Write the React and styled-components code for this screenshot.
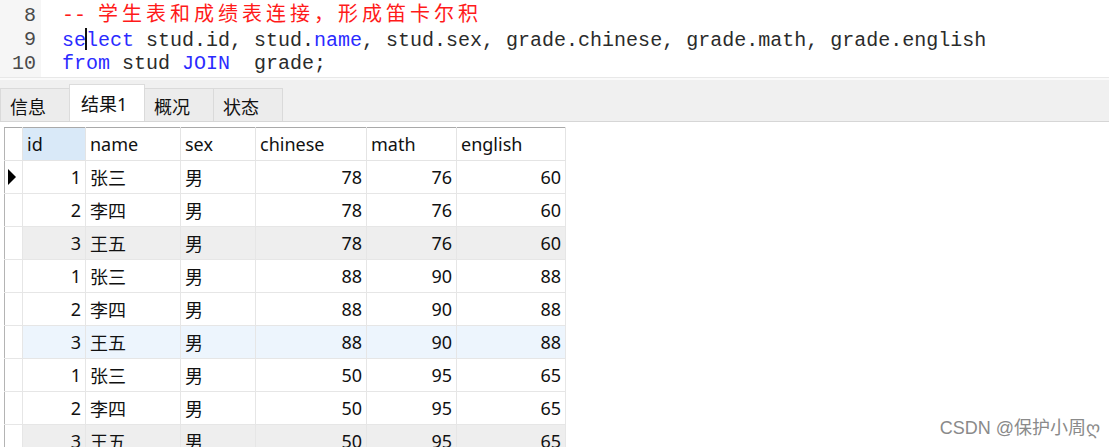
import React from "react";
import styled, { createGlobalStyle } from "styled-components";

const rows = [
  { id: 1, name: "张三", sex: "男", chinese: 78, math: 76, english: 60 },
  { id: 2, name: "李四", sex: "男", chinese: 78, math: 76, english: 60 },
  { id: 3, name: "王五", sex: "男", chinese: 78, math: 76, english: 60, tone: "gray" },
  { id: 1, name: "张三", sex: "男", chinese: 88, math: 90, english: 88 },
  { id: 2, name: "李四", sex: "男", chinese: 88, math: 90, english: 88 },
  { id: 3, name: "王五", sex: "男", chinese: 88, math: 90, english: 88, tone: "blue" },
  { id: 1, name: "张三", sex: "男", chinese: 50, math: 95, english: 65 },
  { id: 2, name: "李四", sex: "男", chinese: 50, math: 95, english: 65 },
  { id: 3, name: "王五", sex: "男", chinese: 50, math: 95, english: 65, tone: "gray" },
];

const tabs = ["信息", "结果1", "概况", "状态"];

function App() {
  return (
    <>
      <Global />
      <Page>
        <Editor>
          <Gutter>
            <span>8</span>
            <span>9</span>
            <span>10</span>
          </Gutter>
          <Code>
            <Line>
              <Comment>
                {"-- "}
                <Wide>学生表和成绩表连接，形成笛卡尔积</Wide>
              </Comment>
            </Line>
            <Line>
              <Kw>se</Kw>
              <Caret />
              <Kw>lect</Kw>
              {" stud.id, stud."}
              <Kw>name</Kw>
              {", stud.sex, grade.chinese, grade.math, grade.english"}
            </Line>
            <Line>
              <Kw>from</Kw>
              {" stud "}
              <Kw>JOIN</Kw>
              {"  grade;"}
            </Line>
          </Code>
        </Editor>

        <TabBar>
          {tabs.map((t, i) => (
            <Tab key={t} $active={i === 1}>
              {t}
            </Tab>
          ))}
        </TabBar>

        <Panel>
          <Grid>
            <colgroup>
              <col style={{ width: 18 }} />
              <col style={{ width: 63 }} />
              <col style={{ width: 95 }} />
              <col style={{ width: 75 }} />
              <col style={{ width: 111 }} />
              <col style={{ width: 90 }} />
              <col style={{ width: 109 }} />
            </colgroup>
            <thead>
              <tr>
                <Head />
                <Head $selected>id</Head>
                <Head>name</Head>
                <Head>sex</Head>
                <Head>chinese</Head>
                <Head>math</Head>
                <Head>english</Head>
              </tr>
            </thead>
            <tbody>
              {rows.map((r, i) => (
                <Row key={i} $tone={r.tone}>
                  <Marker>{i === 0 && <Arrow />}</Marker>
                  <Num>{r.id}</Num>
                  <Cell>{r.name}</Cell>
                  <Cell>{r.sex}</Cell>
                  <Num>{r.chinese}</Num>
                  <Num>{r.math}</Num>
                  <Num>{r.english}</Num>
                </Row>
              ))}
            </tbody>
          </Grid>
          <Watermark>CSDN @保护小周ღ</Watermark>
        </Panel>
      </Page>
    </>
  );
}

const Global = createGlobalStyle`
  html, body {
    margin: 0;
    padding: 0;
    background: #fff;
    overflow: hidden;
  }
`;

const Page = styled.div`
  width: 1109px;
  height: 447px;
  overflow: hidden;
  display: flex;
  flex-direction: column;
  font-family: "Noto Sans", "Noto Sans CJK SC", sans-serif;
`;

const Editor = styled.div`
  display: flex;
  flex: none;
  height: 78px;
  border-bottom: 1px solid #e8e8e8;
  box-sizing: border-box;
  font-family: "Liberation Mono", "Noto Sans CJK SC", monospace;
  font-size: 20px;
  color: #2b2b2b;
`;

const Gutter = styled.div`
  width: 41px;
  background: #f6f6f6;
  display: flex;
  flex-direction: column;
  align-items: flex-end;
  padding: 4px 5px 0 0;
  box-sizing: border-box;
  color: #4a4a4a;
  span {
    height: 24px;
    line-height: 24px;
  }
`;

const Code = styled.div`
  padding: 4px 0 0 21px;
`;

const Line = styled.div`
  height: 24px;
  line-height: 24px;
  white-space: pre;
`;

const Kw = styled.span`
  color: #2b2bff;
`;

const Comment = styled.span`
  color: #ff1a1a;
`;

const Wide = styled.span`
  letter-spacing: 4px;
`;

const Caret = styled.span`
  display: inline-block;
  vertical-align: -4px;
  width: 2px;
  height: 22px;
  background: #111;
  margin: 0 -1px;
`;

const TabBar = styled.div`
  flex: none;
  height: 44px;
  background: #f0f0f0;
  border-top: 2px solid #fafafa;
  border-bottom: 1px solid #d6d6d6;
  display: flex;
  align-items: flex-end;
  box-sizing: border-box;
`;

const Tab = styled.div`
  height: ${(p) => (p.$active ? "37px" : "33px")};
  width: ${(p) => (p.$active ? "76px" : "70px")};
  box-sizing: border-box;
  background: ${(p) => (p.$active ? "#fff" : "#ececec")};
  border: 1px solid ${(p) => (p.$active ? "#dcdcdc" : "#dadada")};
  border-bottom: none;
  margin-right: -1px;
  display: flex;
  align-items: center;
  padding-left: ${(p) => (p.$active ? "11px" : "9px")};
  padding-top: ${(p) => (p.$active ? "0" : "2px")};
  font-size: 18px;
  color: #111;
`;

const Panel = styled.div`
  position: relative;
  flex: 1;
  min-height: 0;
  overflow: hidden;
  margin-top: 5px;
  padding-left: 4px;
`;

const Grid = styled.table`
  border-collapse: collapse;
  table-layout: fixed;
  width: 561px;
  border-top: 1px solid #a9a9a9;
  border-left: 1px solid #b4b4b4;
  font-size: 18px;
  color: #111;
`;

const Head = styled.th`
  height: 32px;
  padding: 0 4px;
  text-align: left;
  font-weight: normal;
  background: ${(p) => (p.$selected ? "#d9e9f8" : "#fff")};
  border-right: 1px solid #e4e4e4;
  border-bottom: 1px solid #e4e4e4;
  white-space: nowrap;
`;

const Row = styled.tr`
  background: ${(p) =>
    p.$tone === "gray" ? "#eeeeee" : p.$tone === "blue" ? "#edf5fd" : "#fff"};
`;

const Cell = styled.td`
  height: 32px;
  padding: 0 4px;
  border-right: 1px solid #e6e6e6;
  border-bottom: 1px solid #e6e6e6;
  white-space: nowrap;
`;

const Num = styled(Cell)`
  text-align: right;
`;

const Marker = styled(Cell)`
  padding: 0;
  background: #fff;
  position: relative;
`;

const Arrow = styled.span`
  position: absolute;
  left: 3px;
  top: 50%;
  margin-top: -8px;
  border-top: 8px solid transparent;
  border-bottom: 8px solid transparent;
  border-left: 8px solid #000;
`;

const Watermark = styled.div`
  position: absolute;
  right: 9px;
  bottom: 8px;
  font-size: 18px;
  color: #8a8a8a;
  font-family: "Liberation Sans", "Noto Sans CJK SC", sans-serif;
`;

export default App;
